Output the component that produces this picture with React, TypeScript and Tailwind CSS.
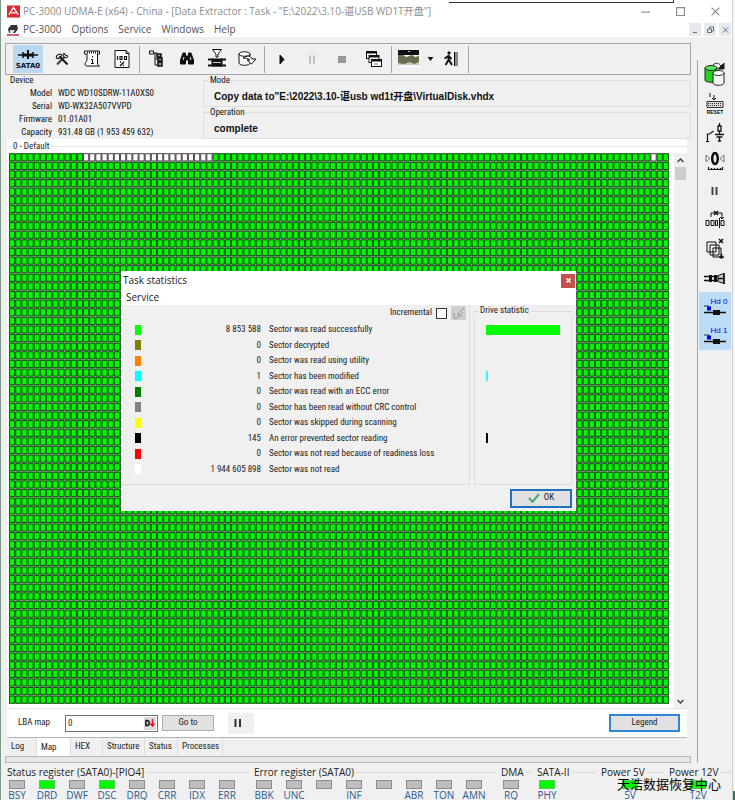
import React, { useState } from "react";

type Led = { label: string; on?: boolean };

const COLS = 107;
const ROWS = 64;

function cellPath(test: (row: number, col: number) => boolean): string {
  const parts: string[] = [];
  for (let r = 0; r < ROWS; r++) {
    for (let c = 0; c < COLS; c++) {
      if (test(r, c)) parts.push(`M${c * 12 + 1} ${r * 12 + 1}h10v10h-10z`);
    }
  }
  return parts.join("");
}

const isUnread = (r: number, c: number) => r === 0 && ((c >= 12 && c < 33) || c === 104);
const readCells = cellPath((r, c) => !isUnread(r, c));
const unreadCells = cellPath(isUnread);

function SectorMap() {
  return (
    <svg
      className="min-w-0 flex-1 self-stretch"
      viewBox={`0 0 ${COLS * 12} ${ROWS * 12}`}
      preserveAspectRatio="none"
      aria-label="Sector map"
    >
      <rect width={COLS * 12} height={ROWS * 12} fill="#a4b4a4" />
      <path d={readCells} fill="#00f800" stroke="#0a400a" strokeWidth="0.85" vectorEffect="non-scaling-stroke" />
      <path d={unreadCells} fill="#ffffff" stroke="#403040" strokeWidth="0.85" vectorEffect="non-scaling-stroke" />
    </svg>
  );
}

function Icon({ children, size = 22 }: { children: React.ReactNode; size?: number }) {
  return (
    <svg width={size} height={size} viewBox="0 0 22 22" fill="none" stroke="#111" strokeWidth="1" aria-hidden="true">
      {children}
    </svg>
  );
}

function ToolButton({ label, children }: { label: string; children: React.ReactNode }) {
  return (
    <button type="button" aria-label={label} className="flex h-7 w-[30px] shrink-0 items-center justify-center">
      {children}
    </button>
  );
}

function Separator() {
  return <div className="mx-0.5 h-[27px] w-px shrink-0 bg-[#a8a8a8]" />;
}

function Toolbar() {
  return (
    <div className="flex h-8 items-center border border-[#a6a6a6] pr-1">
      <button
        type="button"
        aria-label="SATA0"
        className="ml-[7px] mr-1 flex h-7 w-[30px] shrink-0 flex-col items-center justify-center bg-[#bcd9f2]"
      >
        <svg width="30" height="28" viewBox="0 0 30 28" aria-hidden="true">
          <path d="M5 10h20M10 7v6M20 7v6" stroke="#111" strokeWidth="1.5" />
          <path d="M10 8.500h10v3H10z" fill="#111" />
          <path d="M15 5v9" stroke="#111" strokeWidth="2" />
          <text x="15" y="23" textAnchor="middle" fontSize="7" fontWeight="900" fontFamily="DejaVu Sans, sans-serif" fill="#111">
            SATA0
          </text>
        </svg>
      </button>
      <ToolButton label="Utility">
        <Icon>
          <path d="M6 16.500l8-8" strokeWidth="2.200" stroke="#444" />
          <path d="M16.500 16.500L9 9" strokeWidth="2" />
          <path d="M5 10l1-3 4-1 1 2-3 1v2z" fill="#ddd" />
          <path d="M13 5l1 2 3 1c0 2-3 2-4 1l-1-2z" fill="#ddd" />
        </Icon>
      </ToolButton>
      <ToolButton label="Drive information">
        <Icon>
          <path d="M3.500 3h15v3h-2v9c0 3 2 3 2 3H6s-2 0-2-2 2-2 2-4V6H3.500z" fill="#fff" />
          <path d="M6 4.500h11" strokeDasharray="1 1" strokeWidth="2" />
          <path d="M11.500 8v1.500M10 11.500h1.500V15M10 15.500h3" />
        </Icon>
      </ToolButton>
      <ToolButton label="Progress report">
        <Icon>
          <path d="M4 2.500h11l3 3v14H4z" fill="#fff" />
          <path d="M15 2.500v3h3" />
          <path d="M6.500 8v4M9 8.500h2v3H9zM13.500 8.500h2v3h-2z" strokeWidth="1.200" />
          <path d="M9 14h1M13 14l-4 4M12 17.500h1" strokeWidth="1.500" />
        </Icon>
      </ToolButton>
      <Separator />
      <ToolButton label="Structure">
        <Icon>
          <path d="M3.500 3h4v3h-4zM7.500 5h4M9 5v12h3" />
          <path d="M11 6h4v3h-4zM12 10h4v3h-4zM12 14h4v4h-4z" fill="#999" strokeWidth="1.500" />
          <path d="M9 11h3" />
        </Icon>
      </ToolButton>
      <ToolButton label="Find">
        <Icon>
          <path d="M7 5h2.500v3h3V5H15l2.500 7v4h-5v-4h-3v4h-5v-4z" fill="#111" />
          <path d="M7 12l1-3M14 9l1 3" stroke="#ddd" />
        </Icon>
      </ToolButton>
      <ToolButton label="Filter">
        <Icon>
          <path d="M6.500 1.500h9L12 6v3h-2V6z" fill="#fff" />
          <path d="M2 11.500h5M15 11.500h5M2 17.500h18" strokeWidth="2" />
          <path d="M6 11h10v7H6z" fill="#111" />
          <path d="M7 14.500h8" stroke="#ccc" />
        </Icon>
      </ToolButton>
      <ToolButton label="Export">
        <Icon>
          <path d="M14 6c0-3-11-3-11 0v9c0 3 11 3 11 0M3 6c0 3 11 3 11 0v2" fill="#fff" />
          <path d="M7 10c4-3 8-2 9 1h4l-4.500 5-4.500-4h3c-1-1-3-2-7-2z" fill="#fff" />
        </Icon>
      </ToolButton>
      <Separator />
      <div className="flex">
        <ToolButton label="Start">
          <Icon>
            <path d="M9 7l4 4.500L9 16z" fill="#111" />
          </Icon>
        </ToolButton>
        <ToolButton label="Pause">
          <Icon>
            <path d="M9 7.500v8M13 7.500v8" stroke="#aaa" strokeWidth="1.500" />
          </Icon>
        </ToolButton>
        <ToolButton label="Stop">
          <Icon>
            <path d="M7 8h8v7H7z" fill="#999" stroke="none" />
          </Icon>
        </ToolButton>
        <div className="pl-0.5">
          <ToolButton label="Windows">
            <svg width="22" height="22" viewBox="0 0 22 22" stroke="#111" aria-hidden="true">
              {[0, 1, 2].map((i) => (
                <g key={i}>
                  <rect x={3.5 + i * 2.5} y={3.5 + i * 4} width="10" height="7" fill="#fff" />
                  <path d={`M${3.5 + i * 2.5} ${4.5 + i * 4}h10`} strokeWidth="2" />
                </g>
              ))}
              <path d="M11 16h4" stroke="#777" />
            </svg>
          </ToolButton>
        </div>
      </div>
      <Separator />
      <ToolButton label="Map view">
        <svg width="22" height="22" viewBox="0 0 22 22" aria-hidden="true">
          <path d="M0 2h21v18H0z" fill="#f8f8f8" />
          <path d="M0 2h21v5H0z" fill="#111" />
          <path d="M0 7h5l3 2 6-2 3 2 4-1v8H0z" fill="#6b6b50" />
          <path d="M10 3h2v1h-2zM0 15l6 1 6-2 4 2 5-2v3H0z" fill="#c4c8bc" />
        </svg>
      </ToolButton>
      <button type="button" aria-label="Map view options" className="flex h-7 w-3 shrink-0 items-center justify-center">
        <svg width="7" height="4" viewBox="0 0 7 4" aria-hidden="true">
          <path d="M0.500 0h6l-3 4z" fill="#111" />
        </svg>
      </button>
      <ToolButton label="Exit">
        <Icon>
          <path d="M14 4h4v14h-4z" fill="#888" stroke="none" />
          <path d="M14.500 4v14" />
          <path d="M8 4h2v2H8z" fill="#111" />
          <path d="M8.500 7v5l-3 5M9 12l3 5M4.500 10.500l4-2.500 3 3" strokeWidth="2" />
        </Icon>
      </ToolButton>
      <Separator />
    </div>
  );
}

function SideButton({ label, active, children }: { label: string; active?: boolean; children: React.ReactNode }) {
  return (
    <button
      type="button"
      aria-label={label}
      className={`flex h-[29px] w-full items-center justify-center ${active ? "bg-[#bcdcf5]" : ""}`}
    >
      {children}
    </button>
  );
}

function HeadIcon({ text }: { text: string }) {
  return (
    <svg width="28" height="28" viewBox="0 0 28 28" aria-hidden="true">
      <text x="18" y="11" textAnchor="middle" fontSize="8" fontFamily="Liberation Sans, sans-serif" fill="#0000e0">
        {text}
      </text>
      <path d="M3 13h5v4" stroke="#333" fill="none" />
      <path d="M6 13.500h4v4H6z" fill="#0000f0" />
      <path d="M3 19.500h22" stroke="#111" strokeWidth="1.500" />
      <path d="M12 17h7v5h-7z" fill="#111" />
    </svg>
  );
}

function SideBar() {
  return (
    <aside className="mt-[23px] w-[35px] shrink-0 border-l border-[#a6a6a6] px-px">
      <SideButton label="Copy drive">
        <svg width="26" height="26" viewBox="0 0 26 26" stroke="#222" aria-hidden="true">
          <path d="M3 6v12c0 3 12 3 12 0V6" fill="#22d322" />
          <ellipse cx="9" cy="6" rx="6" ry="2.500" fill="#55e955" />
          <path d="M11 11v10c0 3 11 3 11 0V11" fill="#f5f5f5" />
          <ellipse cx="16.500" cy="11" rx="5.500" ry="2.500" fill="#fff" />
          <path d="M11 3c3-3 6-2 8 1" fill="none" />
          <path d="M22 1v6h-6z" fill="#111" />
        </svg>
      </SideButton>
      <SideButton label="Reset">
        <svg width="22" height="24" viewBox="0 0 22 24" aria-hidden="true">
          <path d="M6 1v4M10 3v5M8 6l2 2 2-2" stroke="#111" fill="none" />
          <path d="M3 9.500h16v6H3z" fill="#ddd" stroke="#333" />
          <path d="M4 11.500h14M4 13.500h14" stroke="#333" strokeDasharray="1 1" />
          <text x="11" y="22" textAnchor="middle" fontSize="5" fontWeight="900" fontFamily="Liberation Sans, Arial, sans-serif" fill="#111">
            RESET
          </text>
        </svg>
      </SideButton>
      <SideButton label="Power switch">
        <Icon>
          <path d="M3.500 19v-7h2l4-3M2 19.500h3" strokeWidth="1.200" />
          <path d="M14 4h3v5h-3zM15.500 1v3M15.500 9v3M11 12.500h9M12.500 15h6M15.500 15v5M14 19h3" strokeWidth="1.300" />
        </Icon>
      </SideButton>
      <SideButton label="Recalibration">
        <Icon>
          <ellipse cx="11" cy="7.500" rx="2.800" ry="5.500" strokeWidth="2.500" />
          <path d="M2 4l4 3.500L2 11zM20 4l-4 3.500L20 11z" stroke="#777" />
          <path d="M4 18.500h15M4.500 16v3M7.500 17v2M10.500 17v2M13.500 17v2M16.500 17v2M18.500 16v3" strokeWidth="1.200" />
        </Icon>
      </SideButton>
      <SideButton label="Pause">
        <Icon>
          <path d="M8.500 7v8M12.500 7v8" strokeWidth="2" stroke="#444" />
        </Icon>
      </SideButton>
      <SideButton label="Skip sectors">
        <Icon>
          <path d="M7 8V4h11v6M16 8l2 2 2-2" />
          <path d="M10 2l4 4M14 2l-4 4" strokeWidth="1.500" />
          <path d="M2 11.500h3v5H2zM7 11.500h3v5H7zM11.500 11.500h2v5h-2zM17 11.500h3v5h-3z" />
          <path d="M15.500 9v10" />
        </Icon>
      </SideButton>
      <SideButton label="Remove copies">
        <Icon>
          <path d="M3 4h9v10H3zM6 7h9v10H6zM9 10h8v9H9z" fill="#eee" />
          <path d="M15 1l4 4M19 1l-4 4M15 19h5M17.500 16v5" strokeWidth="1.500" />
        </Icon>
      </SideButton>
      <SideButton label="Connector">
        <Icon>
          <path d="M0 9.500h14M0 13.500h14" strokeWidth="1.500" />
          <path d="M5 8h3v7H5zM10 8h3v7h-3z" fill="#111" stroke="none" />
          <path d="M14 8.500l6-2v10l-6-2z" fill="#ccc" />
          <path d="M20 6v11M14 11.500h6" strokeWidth="1.500" />
        </Icon>
      </SideButton>
      <SideButton label="Head 0" active>
        <HeadIcon text="Hd 0" />
      </SideButton>
      <SideButton label="Head 1" active>
        <HeadIcon text="Hd 1" />
      </SideButton>
    </aside>
  );
}

function InfoBox({ title, children }: { title: string; children: React.ReactNode }) {
  return (
    <fieldset className="h-8 min-w-0 border border-[#dedede] pl-[10px]">
      <legend className="-ml-[5px] h-[11px] px-px leading-[11px]">{title}</legend>
      <p className="pt-[3px] font-['Liberation_Sans','Noto_Sans_CJK_SC',sans-serif] text-[10px] font-bold leading-4 whitespace-nowrap">{children}</p>
    </fieldset>
  );
}

const device = [
  ["Model", "WDC WD10SDRW-11A0XS0"],
  ["Serial", "WD-WX32A507VVPD"],
  ["Firmware", "01.01A01"],
  ["Capacity", "931.48 GB (1 953 459 632)"],
];

function DriveInfo() {
  return (
    <div className="flex text-[9px] text-[#111]">
      <fieldset className="h-[64px] w-[196px] shrink-0">
        <legend className="ml-[3px] leading-[11px]">Device</legend>
        <dl className="grid grid-cols-[45px_1fr] gap-x-1.5 pt-px leading-[13px]">
          {device.map(([k, v]) => (
            <React.Fragment key={k}>
              <dt className="text-right">{k}</dt>
              <dd className="whitespace-nowrap">{v}</dd>
            </React.Fragment>
          ))}
        </dl>
      </fieldset>
      <div className="flex min-w-0 flex-1 flex-col">
        <InfoBox title="Mode">Copy data to"E:\2022\3.10-谌usb wd1t开盘\VirtualDisk.vhdx</InfoBox>
        <InfoBox title="Operation">complete</InfoBox>
      </div>
    </div>
  );
}

function ScrollBar() {
  return (
    <div className="flex w-[13px] shrink-0 flex-col items-center bg-[#f0f0f0]">
      <button type="button" aria-label="Scroll up" className="flex h-[14px] w-full items-center justify-center">
        <svg width="7" height="5" viewBox="0 0 7 5" aria-hidden="true">
          <path d="M0.500 4l3-3 3 3" fill="none" stroke="#444" strokeWidth="1.500" />
        </svg>
      </button>
      <div className="h-[13px] w-[11px] bg-[#cdcdcd]" />
      <div className="flex-1" />
      <button type="button" aria-label="Scroll down" className="flex h-[14px] w-full items-center justify-center">
        <svg width="7" height="5" viewBox="0 0 7 5" aria-hidden="true">
          <path d="M0.500 1l3 3 3-3" fill="none" stroke="#444" strokeWidth="1.500" />
        </svg>
      </button>
    </div>
  );
}

function MapPanel() {
  const [lba, setLba] = useState("0");
  return (
    <section className="flex min-h-0 flex-1 flex-col border-b border-[#b4b4b4] bg-white text-[9px]">
      <div className="flex h-[14px] items-center gap-0.5 leading-3">
        <span className="h-px w-1 bg-[#f0e4e0]" />
        <span>0 - Default</span>
        <span className="h-px flex-1 bg-[#f0e4e0]" />
      </div>
      <div className="flex min-h-0 flex-1 border-b border-[#e2e2e2]">
        <div className="flex min-w-0 flex-1 pl-0.5 pr-[5px] pb-1">
          <SectorMap />
        </div>
        <ScrollBar />
      </div>
      <div className="flex h-7 shrink-0 items-center pl-[11px] pr-[7px]">
        <label htmlFor="lba" className="w-[47px]">
          LBA map
        </label>
        <div className="flex h-[17px] w-[93px] items-center border border-[#707070] bg-white pr-px">
          <input
            id="lba"
            value={lba}
            onChange={(e) => setLba(e.target.value)}
            className="h-full min-w-0 flex-1 pl-0.5 outline-none"
          />
          <button type="button" aria-label="Number base" className="flex h-[13px] w-3 items-center justify-center bg-[#dcdcdc]">
            <svg width="10" height="8" viewBox="0 0 10 8" aria-hidden="true">
              <path d="M1 1.500h1.500l1.500 1v3l-1.500 1H1z" fill="none" stroke="#111" strokeWidth="1.500" />
              <path d="M7.500 0v6M5.500 4.500l2 2.500 2-2.500" fill="none" stroke="#e01020" strokeWidth="1.500" />
            </svg>
          </button>
        </div>
        <button type="button" className="ml-1 h-4 w-[52px] border border-[#adadad] bg-[#e1e1e1]">
          Go to
        </button>
        <button type="button" aria-label="Pause map" className="ml-3.5 flex h-[21px] w-[26px] items-center justify-center bg-[#f0f0f0] pr-1.5">
          <svg width="8" height="8" viewBox="0 0 8 8" aria-hidden="true">
            <path d="M1.500 0v8M6 0v8" stroke="#333" strokeWidth="2" />
          </svg>
        </button>
        <button type="button" className="ml-auto h-[18px] w-[71px] border-2 border-[#2f86d6] bg-[#e1e1e1]">
          Legend
        </button>
      </div>
    </section>
  );
}

const tabs = [
  { name: "Log", width: "w-[30px]" },
  { name: "Map", width: "w-[34px]" },
  { name: "HEX", width: "w-[32px]" },
  { name: "Structure", width: "w-[42px]" },
  { name: "Status", width: "w-[33px]" },
  { name: "Processes", width: "w-[45px]" },
];

function TabBar() {
  return (
    <nav className="flex h-[18px] shrink-0 text-[9px]">
      {tabs.map((t) => (
        <button
          type="button"
          key={t.name}
          className={`${t.width} h-full shrink-0 border-r border-[#dedede] pl-1 text-left ${t.name === "Map" ? "bg-white pt-0.5" : ""}`}
        >
          {t.name}
        </button>
      ))}
    </nav>
  );
}

function Register({ title, leds, className }: { title: string; leds: Led[]; className: string }) {
  return (
    <section className={`flex shrink-0 flex-col whitespace-nowrap ${className}`}>
      <div className="flex items-center gap-0.5 self-stretch">
        <h2 className="pl-[5px] text-[10px] leading-4 text-[#222]">{title}</h2>
        <span className="h-px flex-1 bg-[#dcdcdc]" />
      </div>
      <ul className="flex">
        {leds.map((l, i) => (
          <li key={i} className="flex w-[30px] flex-col items-center">
            <span className={`h-[9px] w-4 border ${l.on ? "border-[#5ac85a] bg-[#00fa00]" : "border-[#8c8c8c] bg-[#bdbdbd]"}`} />
            <span className="h-[11px] text-[10px] leading-3 text-[#2b5b94]">{l.label}</span>
          </li>
        ))}
      </ul>
    </section>
  );
}

function StatusBar() {
  return (
    <footer className="flex h-9 shrink-0 pl-px font-['Open_Sans','Noto_Sans',sans-serif]">
      <Register
        className="w-[247px]"
        title="Status register (SATA0)-[PIO4]"
        leds={[{ label: "BSY" }, { label: "DRD", on: true }, { label: "DWF" }, { label: "DSC", on: true }, { label: "DRQ" }, { label: "CRR" }, { label: "IDX" }, { label: "ERR" }]}
      />
      <Register
        className="w-[247px]"
        title="Error register (SATA0)"
        leds={[{ label: "BBK" }, { label: "UNC" }, { label: "" }, { label: "INF" }, { label: "" }, { label: "ABR" }, { label: "TON" }, { label: "AMN" }]}
      />
      <Register className="w-9" title="DMA" leds={[{ label: "RQ" }]} />
      <Register className="w-16" title="SATA-II" leds={[{ label: "PHY", on: true }]} />
      <Register className="w-[68px] items-center" title="Power 5V" leds={[{ label: "5V", on: true }]} />
      <Register className="w-[68px] items-center" title="Power 12V" leds={[{ label: "12V", on: true }]} />
    </footer>
  );
}

const stats = [
  { color: "bg-[#00ff00]", count: "8 853 588", text: "Sector was read successfully", bar: "w-[74px] bg-[#00ff00]" },
  { color: "bg-[#808000]", count: "0", text: "Sector decrypted", bar: "" },
  { color: "bg-[#ff8000]", count: "0", text: "Sector was read using utility", bar: "" },
  { color: "bg-[#00ffff]", count: "1", text: "Sector has been modified", bar: "w-0.5 bg-[#40f4ff]" },
  { color: "bg-[#008000]", count: "0", text: "Sector was read with an ECC error", bar: "" },
  { color: "bg-[#808080]", count: "0", text: "Sector has been read without CRC control", bar: "" },
  { color: "bg-[#ffff00]", count: "0", text: "Sector was skipped during scanning", bar: "" },
  { color: "bg-black", count: "145", text: "An error prevented sector reading", bar: "w-0.5 bg-black" },
  { color: "bg-[#ff0000]", count: "0", text: "Sector was not read because of readiness loss", bar: "" },
  { color: "bg-white", count: "1 944 605 898", text: "Sector was not read", bar: "" },
];

function StatsDialog() {
  return (
    <div role="dialog" aria-labelledby="stats-title" className="absolute top-[271px] left-[121px] flex h-[240px] w-[455px] flex-col bg-[#f0f0f0] text-[#222]">
      <header className="flex h-[19px] items-center justify-between bg-white pl-0.5 pr-px">
        <h2 id="stats-title" className="font-['Open_Sans','Noto_Sans',sans-serif] text-[10px]">
          Task statistics
        </h2>
        <button type="button" aria-label="Close" className="flex h-[14px] w-[14px] items-center justify-center bg-[#c75050]">
          <svg width="5" height="5" viewBox="0 0 5 5" aria-hidden="true">
            <path d="M0.500 0.500l4 4M4.500 0.500l-4 4" stroke="#fff" strokeWidth="1.500" />
          </svg>
        </button>
      </header>
      <nav className="flex h-[15px] items-center bg-white pl-[5px] font-['Open_Sans','Noto_Sans',sans-serif] text-[10px]">
        <button type="button">Service</button>
      </nav>
      <div className="flex h-[180px] gap-1 pr-1 text-[9px]">
        <div className="min-w-0 flex-1 border-r border-b border-[#dcdcdc]">
          <div className="flex h-4 items-center justify-end gap-1 pr-[3px]">
            <label htmlFor="incremental">Incremental</label>
            <input id="incremental" type="checkbox" className="size-[11px] appearance-none border border-[#333] bg-white" />
            <button type="button" aria-label="Clear" className="flex h-[14px] w-[15px] items-center justify-center bg-[#cfcfcf]">
              <svg width="13" height="13" viewBox="0 0 13 13" fill="none" stroke="#8f8f8f" aria-hidden="true">
                <path d="M12 1L5 8M2 6v5h3M6 11c0-4 4-4 5-6M7 8l3 2" />
                <path d="M11 3L7 7" stroke="#fff" />
              </svg>
            </button>
          </div>
          <ul className="flex h-[156px] flex-col pt-px">
            {stats.map((s) => (
              <li key={s.text} className="flex flex-1 items-center whitespace-nowrap">
                <span className={`ml-3.5 h-2.5 w-1.5 shrink-0 ${s.color}`} />
                <span className="w-[120px] shrink-0 text-right">{s.count}</span>
                <span className="ml-2">{s.text}</span>
              </li>
            ))}
          </ul>
        </div>
        <section className="flex w-[98px] flex-col border-b border-[#dcdcdc]">
          <div className="flex h-3 items-center gap-0.5">
            <span className="h-px w-1 bg-[#dcdcdc]" />
            <h3>Drive statistic</h3>
            <span className="h-px flex-1 bg-[#dcdcdc]" />
          </div>
          <div className="h-[168px] border-x border-[#dcdcdc] pt-1">
            <ul className="flex h-[156px] flex-col pt-px">
              {stats.map((s) => (
                <li key={s.text} className="flex flex-1 items-center pl-[11px]">
                  <span className={`h-2.5 ${s.bar}`} />
                </li>
              ))}
            </ul>
          </div>
        </section>
      </div>
      <div className="flex flex-1 items-center justify-end pr-1">
        <button type="button" className="flex h-[19px] w-[62px] items-center justify-center gap-1 border-2 border-[#1f70bd] bg-[#e1e1e1] text-[9px]">
          <svg width="12" height="10" viewBox="0 0 12 10" aria-hidden="true">
            <path d="M1 5l3.500 4L11 1" fill="none" stroke="#4da87c" strokeWidth="2" />
          </svg>
          OK
        </button>
      </div>
    </div>
  );
}

function TitleBar() {
  return (
    <header className="bg-white font-['Open_Sans','Noto_Sans','Noto_Sans_CJK_SC',sans-serif] text-[10px]">
      <div className="flex h-[22px] items-center pl-1.5 text-[#8d8d8d]">
        <svg width="13" height="13" viewBox="0 0 14 13" aria-hidden="true">
          <path d="M0 0h14v13H0z" fill="#df2a30" />
          <path d="M2 10L7 2l5 8M4.500 8h5" fill="none" stroke="#fff" strokeWidth="1.500" />
        </svg>
        <h1 className="ml-[3px] flex-1 whitespace-nowrap">PC-3000 UDMA-E (x64) - China - [Data Extractor : Task - "E:\2022\3.10-谌USB WD1T开盘"]</h1>
        <div className="flex gap-[26px] pr-3">
          {["M0 4.500h8", "M0.500 0.500h7v7h-7z", "M0.500 0.500l7 7M7.500 0.500l-7 7"].map((d, i) => (
            <button type="button" key={d} aria-label={["Minimize", "Maximize", "Close"][i]}>
              <svg width="9" height="9" viewBox="0 0 8 8" fill="none" stroke="#8a8a8a" aria-hidden="true">
                <path d={d} />
              </svg>
            </button>
          ))}
        </div>
      </div>
      <div className="flex h-[15px] items-center pl-1.5 text-[#555]">
        <svg width="12" height="12" viewBox="0 0 12 12" aria-hidden="true">
          <path d="M1 5l3-4h6l1 4-3 4H2z" fill="#333" />
          <path d="M3 6h5l-2 3H3z" fill="#ddd" />
          <path d="M0 11h12" stroke="#c03030" strokeWidth="1.500" />
        </svg>
        <nav className="ml-1 flex flex-1 gap-2.5">
          {["PC-3000", "Options", "Service", "Windows", "Help"].map((m) => (
            <button type="button" key={m}>
              {m}
            </button>
          ))}
        </nav>
        <div className="flex gap-[3px] pr-px">
          {["M1 6.500h4", "M2.500 3V1h4v4h-2M0.500 3h4v3.500h-4z", "M1 1.500l5 5M6 1.500l-5 5"].map((d, i) => (
            <button
              type="button"
              key={d}
              aria-label={["Minimize task", "Restore task", "Close task"][i]}
              className="flex h-[13px] w-3 items-center justify-center bg-[#e6e9ee]"
            >
              <svg width="7" height="8" viewBox="0 0 7 8" fill="none" stroke="#66707c" aria-hidden="true">
                <path d={d} />
              </svg>
            </button>
          ))}
        </div>
      </div>
    </header>
  );
}

export default function App() {
  return (
    <div className="relative flex h-screen overflow-hidden bg-[#f0f0f0] font-['Roboto_Condensed','Roboto','Noto_Sans_CJK_SC',sans-serif] text-[#222]">
      <div className="w-px shrink-0 bg-[#7d9a88]" />
      <div className="flex min-w-0 flex-1 flex-col">
        <TitleBar />
        <div className="flex min-h-0 flex-1">
          <main className="flex min-w-0 flex-1 flex-col pr-[6px] pl-1">
            <div className="pt-1.5">
              <Toolbar />
            </div>
            <div className="pl-0.5">
              <DriveInfo />
            </div>
            <div className="flex min-h-0 flex-1 flex-col pr-1 pl-0.5">
              <MapPanel />
              <TabBar />
            </div>
            <div className="h-[7px] shrink-0 border border-[#b8b8b8] bg-[#e6e6e6]" />
          </main>
          <SideBar />
        </div>
        <div className="pt-px">
          <StatusBar />
        </div>
      </div>
      <div className="flex w-[3px] shrink-0 flex-col border-l border-[#d0d0d0] bg-[#f7f7f7]">
        <div className="mt-auto h-[9px] bg-[#2a7a50]" />
      </div>
      <div className="absolute top-0 left-[449px] h-[3px] w-[225px] border-r border-b border-[#333] bg-white" />
      <StatsDialog />
      <p className="absolute right-[14px] bottom-[7px] font-['Noto_Sans_CJK_SC',sans-serif] text-[13px] leading-[18px] text-black">天浩数据恢复中心</p>
    </div>
  );
}
